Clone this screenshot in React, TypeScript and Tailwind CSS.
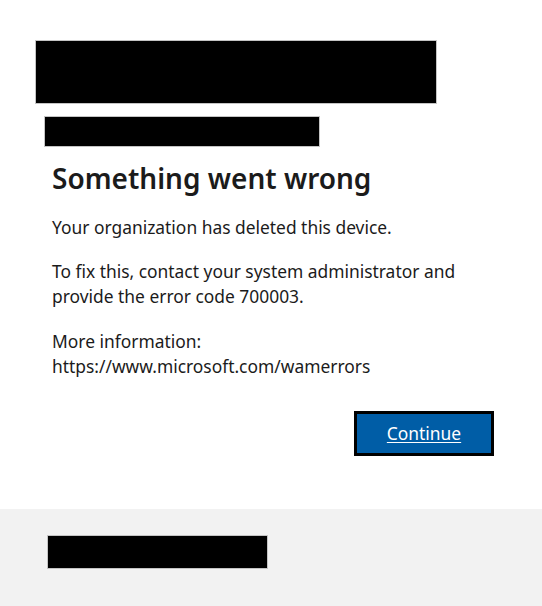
export default function App() {
  return (
    <div
      className="w-[542px] h-[606px] bg-white flex flex-col text-[#1b1b1b]"
      style={{ fontFamily: '"Noto Sans", "Open Sans", sans-serif' }}
    >
      <div className="flex-1 pt-[40px]">
        {/* redacted header blocks */}
        <div className="ml-[35px] w-[402px] h-[64px] bg-black border border-[#c4c4c4]" />
        <div className="ml-[44px] mt-[12px] w-[276px] h-[31px] bg-black border border-[#c4c4c4]" />

        <div className="px-[52px]">
          <h1 className="mt-[13px] text-[28px] leading-[36px] font-semibold">Something went wrong</h1>
          <p className="mt-[19px] text-[17.4px] leading-[25px]">Your organization has deleted this device.</p>
          <p className="mt-[19px] text-[17.4px] leading-[25px]">
            To fix this, contact your system administrator and provide the error code 700003.
          </p>
          <p className="mt-[20px] text-[17.4px] leading-[25px]">
            More information:
            <br />
            https://www.microsoft.com/wamerrors
          </p>
        </div>

        <div className="flex justify-end pr-[48px] mt-[32px]">
          <button className="w-[140px] h-[45px] bg-[#005da6] border-[3px] border-black text-white text-[17.4px] underline underline-offset-2">
            Continue
          </button>
        </div>
      </div>

      <div className="h-[97px] bg-[#f2f2f2] pt-[26px] pl-[47px]">
        <div className="w-[221px] h-[34px] bg-black border border-[#c4c4c4]" />
      </div>
    </div>
  );
}
